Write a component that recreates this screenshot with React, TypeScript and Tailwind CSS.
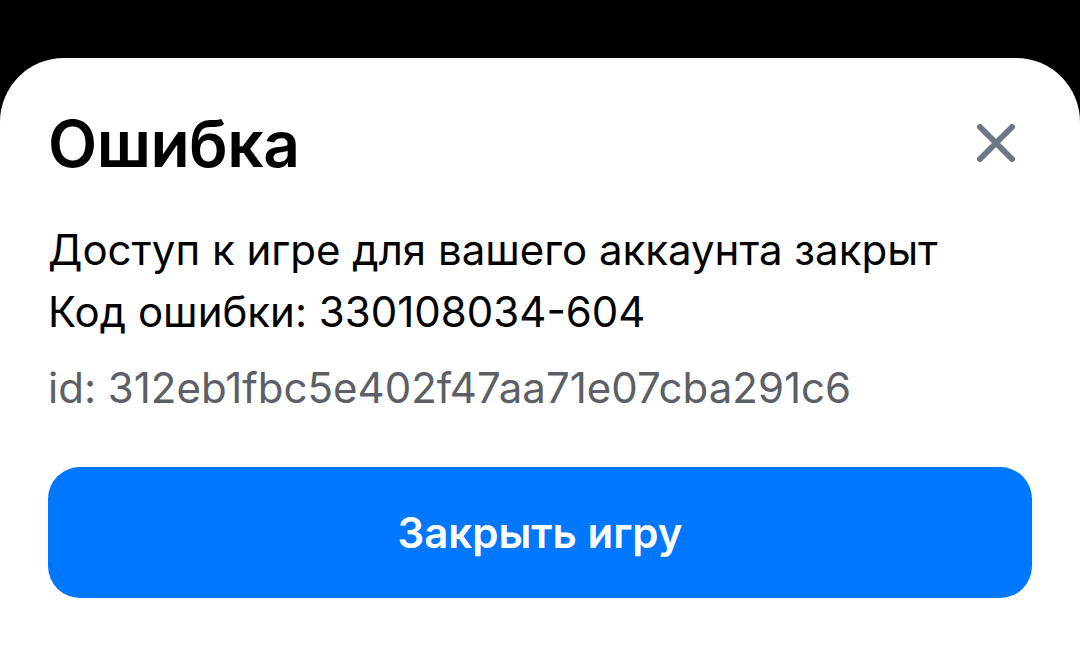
import React from "react";

function CloseIcon() {
  return (
    <svg width="38" height="38" viewBox="0 0 38 38" fill="none">
      <path
        d="M3 3L35 35M35 3L3 35"
        stroke="#6d7885"
        strokeWidth="6"
        strokeLinecap="round"
      />
    </svg>
  );
}

export default function App() {
  return (
    <div
      className="h-[647px] w-full bg-black pt-[58px] overflow-hidden"
      style={{ fontFamily: "Inter, 'Noto Sans', sans-serif" }}
    >
      <div className="h-full bg-white rounded-t-[64px] px-[48px] pt-[100px]">
        <div className="flex items-center justify-between h-[80px] -mt-[54px]">
          <h1 className="text-[64px] font-semibold text-[#000] tracking-[-0.5px] leading-none">
            Ошибка
          </h1>
          <button className="mr-[17px] -mt-[3px]">
            <CloseIcon />
          </button>
        </div>
        <div className="mt-[35px] text-[42px] leading-[62px] text-[#000]">
          <p>Доступ к игре для вашего аккаунта закрыт</p>
          <p>Код ошибки: 330108034-604</p>
        </div>
        <p className="mt-[14px] text-[42px] leading-[62px] text-[#5c6066]">
          id: 312eb1fbc5e402f47aa71e07cba291c6
        </p>
        <button className="mt-[48px] w-full h-[131px] rounded-[32px] bg-[#0077ff] text-white text-[42px] font-semibold">
          Закрыть игру
        </button>
      </div>
    </div>
  );
}
